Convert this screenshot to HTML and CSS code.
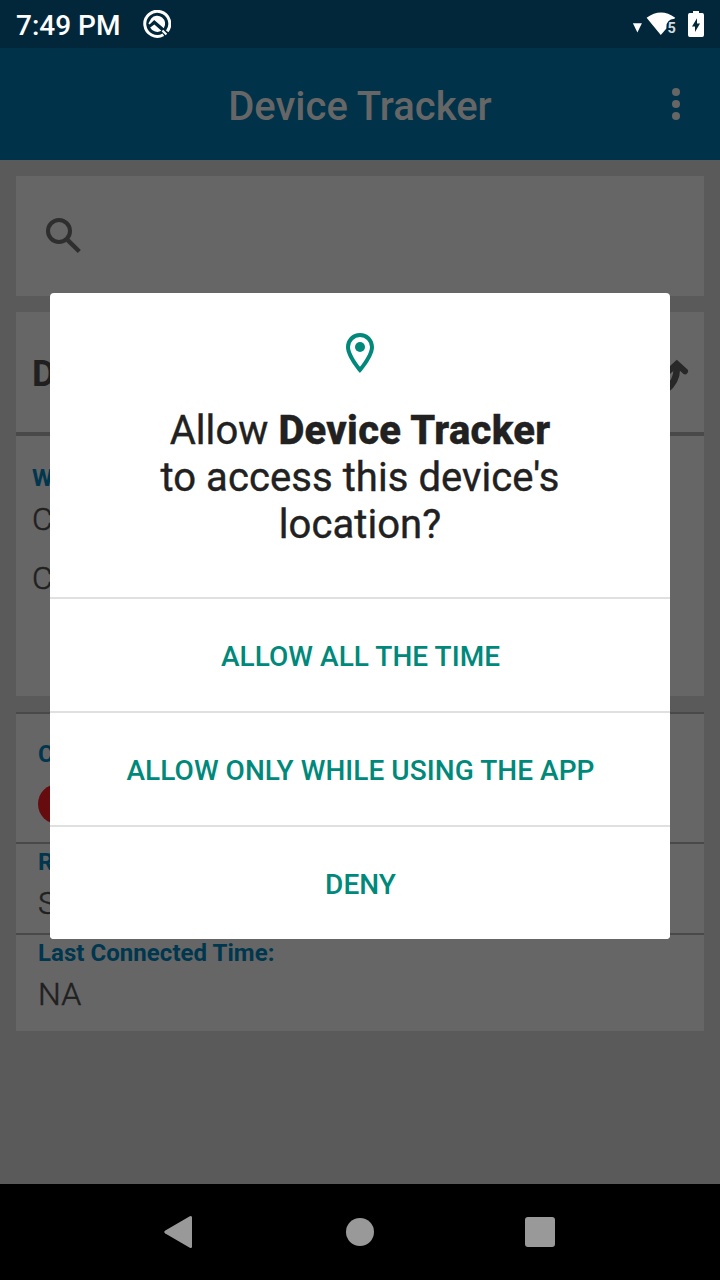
FILE: index.html
```html
<!DOCTYPE html>
<html lang="en">
<head>
<meta charset="utf-8">
<title>Device Tracker</title>
<link rel="stylesheet" href="styles.css">
</head>
<body>
<div class="screen">
  <header class="status-bar">
    <span class="clock">7:49 PM</span>
    <svg class="status-app" width="28" height="28" viewBox="0 0 28 28">
      <path d="M24.2 21.4A12.5 12.5 0 1 0 20.4 24.7" fill="none" stroke="#fff" stroke-width="3"/>
      <path d="M8.2 8.4A8 8 0 0 1 20.8 18.2L11.2 10L6.6 14.6L5.4 13.4Z" fill="#fff"/>
      <path d="M7.2 17.4L11.4 14.6L18.4 20.8A8 8 0 0 1 7.2 17.4Z" fill="#fff"/>
      <path d="M19.4 20.4L23.4 24.6" stroke="#fff" stroke-width="2.2"/>
    </svg>
    <svg class="status-icons" width="72" height="28" viewBox="0 0 72 28">
      <path d="M0.9 13.3H9.9L5.4 22.4Z" fill="#fff"/>
      <path d="M14.6 7.7Q29 -2.7 43.2 7.7L42.4 8.8Q34.4 9.5 34.4 17V18.6L28.8 25Z" fill="#fff"/>
      <text class="wifi-level" x="35.6" y="23.2">5</text>
      <path d="M56.8 3H61V1H67V3H70.2Q72 3 72 5V25Q72 27 70.2 27H57.8Q56 27 56 25V5Q56 3 57.8 3Z" fill="#fff"/>
      <path d="M65 8.2V13.4H68L63 22V16.6H60Z" fill="#02273a"/>
    </svg>
  </header>
  <div class="app-bar">
    <h1 class="app-title">Device Tracker</h1>
    <svg class="more" width="8" height="32" viewBox="0 0 8 32" fill="#666">
      <circle cx="4" cy="4" r="4"/><circle cx="4" cy="16" r="4"/><circle cx="4" cy="28" r="4"/>
    </svg>
  </div>
  <main class="content">
    <section class="card search">
      <svg width="36" height="36" viewBox="0 0 36 36" fill="none" stroke="#2e2e2e">
        <circle cx="13" cy="13" r="11" stroke-width="4"/>
        <path d="M21.7 22.2L33.3 33.5" stroke-width="4.4"/>
      </svg>
    </section>
    <section class="card device">
      <div class="device-head">
        <span class="device-name">D</span>
        <svg class="route" width="40" height="36" viewBox="0 0 40 36" fill="none" stroke="#282828" stroke-linecap="round">
          <path d="M19.5 12.4L27.8 4.8L36 12.2" stroke-width="6"/>
          <path d="M27.8 7V10Q27.8 22.5 17 31" stroke-width="6.6"/>
        </svg>
      </div>
      <div class="device-body">
        <span class="label">W</span>
        <span class="value">C</span>
        <span class="value second">C</span>
      </div>
    </section>
    <section class="card details">
      <div class="row connection">
        <span class="label">C</span>
        <span class="state-dot"></span>
      </div>
      <div class="row registration">
        <span class="label">R</span>
        <span class="value">S</span>
      </div>
      <div class="row last-time">
        <span class="label">Last Connected Time:</span>
        <span class="value">NA</span>
      </div>
    </section>
  </main>
  <nav class="nav-bar">
    <svg width="30" height="34" viewBox="0 0 30 34"><path d="M1.3 15.6L25.8 1.2Q28 0.2 28 2.5V31.5Q28 33.8 25.8 32.8L1.3 18.4Q-0.8 17 1.3 15.6Z" fill="#999"/></svg>
    <span class="home"></span>
    <span class="recents"></span>
  </nav>
  <div class="dialog" role="dialog">
    <div class="dialog-head">
      <svg width="28" height="40" viewBox="0 0 28 40">
        <path d="M14 0C6.2 0 0 6.2 0 14C0 24.5 14 40 14 40S28 24.5 28 14C28 6.2 21.8 0 14 0ZM4 14A10 10 0 0 1 24 14C24 19.8 18.2 28.4 14 33.8C9.8 28.5 4 19.7 4 14Z" fill="#00897b"/>
        <circle cx="14" cy="14" r="5" fill="#00897b"/>
      </svg>
      <p class="message">Allow <b>Device Tracker</b><br>to access this device's<br>location?</p>
    </div>
    <button class="choice">ALLOW ALL THE TIME</button>
    <button class="choice">ALLOW ONLY WHILE USING THE APP</button>
    <button class="choice">DENY</button>
  </div>
</div>
</body>
</html>
```
FILE: styles.css
```css
* { box-sizing: border-box; }
body { margin: 0; font-family: Roboto, sans-serif; }
svg { display: block; flex: none; }

.screen {
  position: relative;
  display: flex;
  flex-direction: column;
  width: 720px;
  height: 1280px;
  overflow: hidden;
  background: #5a5a5a;
}

.status-bar {
  display: flex;
  align-items: center;
  height: 48px;
  padding: 0 16px;
  background: #02273a;
  color: #fff;
}
.clock { font-size: 28px; font-weight: 500; line-height: 44px; padding-top: 3px; }
.status-app { margin-left: 23px; }
.status-icons { margin-left: auto; }
.wifi-level { font-size: 14.5px; font-weight: 700; fill: #d3dade; }

.app-bar {
  display: grid;
  grid-template-columns: 1fr auto 1fr;
  align-items: center;
  height: 112px;
  padding: 0 40px;
  background: #003249;
}
.app-title {
  grid-column: 2;
  margin: 6px 0 0;
  color: #666;
  font-size: 40px;
  font-weight: 500;
  line-height: 48px;
}
.more { justify-self: end; }

.content {
  flex: 1;
  display: flex;
  flex-direction: column;
  gap: 16px;
  padding: 16px;
}
.card { background: #666; color: #202020; }
.search { height: 120px; padding: 42px 30px; }

.device { height: 384px; }
.device-head {
  display: flex;
  align-items: center;
  justify-content: space-between;
  height: 124px;
  padding: 0 15px 0 16px;
  border-bottom: 4px solid #494949;
}
.route { margin-top: 10px; }
.device-name { font-size: 36px; font-weight: 700; line-height: 44px; padding-top: 4px; }
.device-body { display: flex; flex-direction: column; padding: 28px 16px 0; }
.label { color: #00374f; font-size: 24px; font-weight: 700; line-height: 28px; letter-spacing: 0.05px; }
.value {
  font-size: 32px;
  font-weight: 300;
  line-height: 38px;
  letter-spacing: 0.3px;
  -webkit-text-stroke: 0.5px #202020;
}
.device-body .value { margin-top: 8px; }
.device-body .second { margin-top: 21px; }

.details { height: 319px; }
.row {
  display: flex;
  flex-direction: column;
  padding: 4px 22px 0;
  border-top: 2px solid #494949;
}
.connection { height: 130px; padding-top: 26px; }
.state-dot { width: 40px; height: 40px; margin-top: 16px; border-radius: 50%; background: #660c0f; }
.registration { height: 91px; }
.row .value { margin-top: 8px; }

.nav-bar {
  display: flex;
  align-items: center;
  justify-content: space-between;
  height: 96px;
  padding: 0 165px 0 164px;
  background: #000;
}
.home { width: 28px; height: 28px; border-radius: 50%; background: #999; }
.recents { width: 30px; height: 30px; border-radius: 3px; background: #999; }

.dialog {
  position: absolute;
  top: 293px;
  left: 50px;
  width: 620px;
  height: 646px;
  border-radius: 4px;
  overflow: hidden;
  background: #fff;
}
.dialog-head {
  display: flex;
  flex-direction: column;
  align-items: center;
  height: 304px;
  padding-top: 40px;
}
.message {
  margin: 34px 0 0;
  color: #212121;
  font-size: 40px;
  font-weight: 400;
  line-height: 47px;
  text-align: center;
  letter-spacing: 0.07px;
  -webkit-text-stroke: 0.4px #212121;
}
.message b { font-weight: 800; letter-spacing: 0.28px; }
.choice {
  display: block;
  width: 100%;
  height: 114px;
  padding: 4px 0 0 1px;
  border: 0;
  border-top: 2px solid #e0e0e0;
  background: #fff;
  color: #00897b;
  font: 500 28px/34px Roboto, sans-serif;
  letter-spacing: 0.05px;
}
```
